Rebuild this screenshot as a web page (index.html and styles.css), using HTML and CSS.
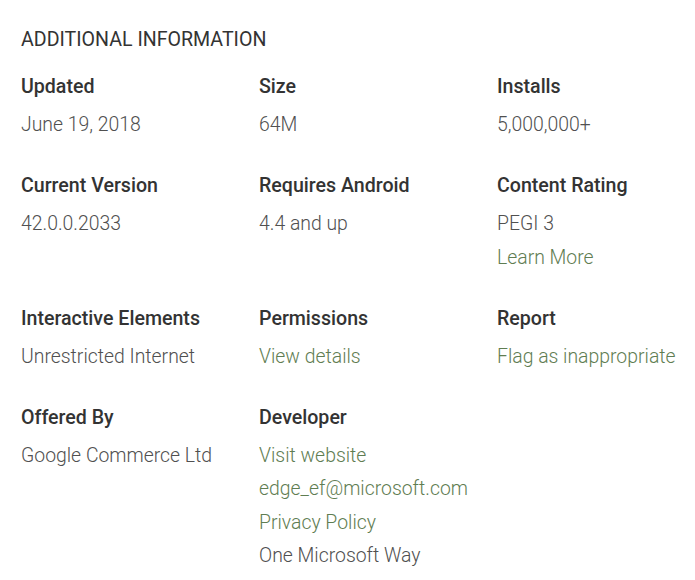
FILE: index.html
```html
<!DOCTYPE html>
<html>
<head>
<meta charset="utf-8">
<link rel="stylesheet" href="styles.css">
</head>
<body>
<section class="info">
  <h2 class="title">ADDITIONAL INFORMATION</h2>
  <div class="grid">
    <div class="item">
      <div class="label">Updated</div>
      <div class="value">June 19, 2018</div>
    </div>
    <div class="item">
      <div class="label">Size</div>
      <div class="value">64M</div>
    </div>
    <div class="item">
      <div class="label">Installs</div>
      <div class="value">5,000,000+</div>
    </div>
    <div class="item">
      <div class="label">Current Version</div>
      <div class="value">42.0.0.2033</div>
    </div>
    <div class="item">
      <div class="label">Requires Android</div>
      <div class="value">4.4 and up</div>
    </div>
    <div class="item">
      <div class="label">Content Rating</div>
      <div class="value">PEGI 3</div>
      <div class="value link">Learn More</div>
    </div>
    <div class="item">
      <div class="label">Interactive Elements</div>
      <div class="value">Unrestricted Internet</div>
    </div>
    <div class="item">
      <div class="label">Permissions</div>
      <div class="value link">View details</div>
    </div>
    <div class="item">
      <div class="label">Report</div>
      <div class="value link">Flag as inappropriate</div>
    </div>
    <div class="item">
      <div class="label">Offered By</div>
      <div class="value">Google Commerce Ltd</div>
    </div>
    <div class="item">
      <div class="label">Developer</div>
      <div class="value link">Visit website</div>
      <div class="value link">edge_ef@microsoft.com</div>
      <div class="value link">Privacy Policy</div>
      <div class="value">One Microsoft Way</div>
    </div>
  </div>
</section>
</body>
</html>
```
FILE: styles.css
```css
html, body {
  margin: 0;
  padding: 0;
  background: #ffffff;
}
body {
  font-family: Roboto, "Liberation Sans", sans-serif;
  -webkit-font-smoothing: antialiased;
}
.info {
  padding: 23px 0 0 21px;
}
.title {
  margin: 0 0 13px 0;
  font-size: 19.6px;
  font-weight: 400;
  line-height: 34px;
  color: #333333;
}
.grid {
  display: grid;
  grid-template-columns: 238px 238px 198px;
  row-gap: 27.5px;
}
.label {
  font-size: 19.6px;
  font-weight: 500;
  line-height: 34px;
  color: #333333;
  margin-bottom: 4px;
}
.value {
  font-size: 19.4px;
  font-weight: 300;
  line-height: 33.5px;
  color: #505050;
}
.link {
  color: #5f7d52;
}
```
